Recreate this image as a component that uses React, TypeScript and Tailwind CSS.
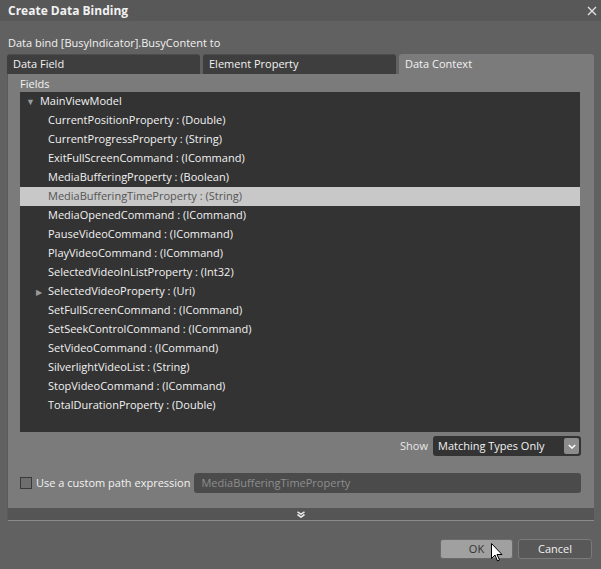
import type { FC } from 'react';

const fields: { name: string; type: string; expandable?: boolean; selected?: boolean }[] = [
  { name: 'CurrentPositionProperty', type: 'Double' },
  { name: 'CurrentProgressProperty', type: 'String' },
  { name: 'ExitFullScreenCommand', type: 'ICommand' },
  { name: 'MediaBufferingProperty', type: 'Boolean' },
  { name: 'MediaBufferingTimeProperty', type: 'String', selected: true },
  { name: 'MediaOpenedCommand', type: 'ICommand' },
  { name: 'PauseVideoCommand', type: 'ICommand' },
  { name: 'PlayVideoCommand', type: 'ICommand' },
  { name: 'SelectedVideoInListProperty', type: 'Int32' },
  { name: 'SelectedVideoProperty', type: 'Uri', expandable: true },
  { name: 'SetFullScreenCommand', type: 'ICommand' },
  { name: 'SetSeekControlCommand', type: 'ICommand' },
  { name: 'SetVideoCommand', type: 'ICommand' },
  { name: 'SilverlightVideoList', type: 'String' },
  { name: 'StopVideoCommand', type: 'ICommand' },
  { name: 'TotalDurationProperty', type: 'Double' },
];

const tabs = [
  { label: 'Data Field', width: 'w-[193px]' },
  { label: 'Element Property', width: 'w-[193px]' },
  { label: 'Data Context', width: 'w-[195px]', active: true },
];

const Chevron: FC<{ className?: string }> = ({ className }) => (
  <svg viewBox="0 0 10 6" className={className} fill="none" stroke="currentColor" strokeWidth="1.8">
    <path d="M1 1l4 4 4-4" />
  </svg>
);

export default function App() {
  return (
    <div className="relative h-[569px] w-[601px] overflow-hidden bg-[#616161] text-[11px] text-[#f2f2f2] [font-family:'Open_Sans',sans-serif]">
      {/* title bar */}
      <div className="flex h-[21px] items-center justify-between bg-[#585858] pl-[8px] pr-[4px]">
        <span className="text-[12px] font-bold">Create Data Binding</span>
        <svg viewBox="0 0 10 10" className="h-[10px] w-[10px] text-[#e0e0e0]" stroke="currentColor" strokeWidth="1.4">
          <path d="M1 1l8 8M9 1l-8 8" />
        </svg>
      </div>

      <div className="px-[7px]">
        <div className="pl-[1px] pt-[12px] leading-[19px]">Data bind [BusyIndicator].BusyContent to</div>

        {/* tabs */}
        <div className="mt-[2px] flex h-[20px] gap-[3px]">
          {tabs.map((t) => (
            <div
              key={t.label}
              className={`${t.width} flex items-center rounded-t-[3px] pl-[6px] ${
                t.active ? 'bg-[#7b7b7b]' : 'border-t border-[#4c4c4c] bg-[#3e3e3e]'
              }`}
            >
              {t.label}
            </div>
          ))}
        </div>

        {/* tab panel */}
        <div className="border-l border-[#5a5a5a] bg-[#7b7b7b]">
          <div className="pb-[15px] pl-[12px] pr-[13px] pt-[2px]">
            <div className="h-[16px] leading-[16px]">Fields</div>
            <div className="h-[340px] w-[560px] bg-[#333333]">
              <div className="flex h-[19px] items-center pl-[6px]">
                <span className="mr-[5px] text-[9px] text-[#9a9a9a]">▼</span>
                <span>MainViewModel</span>
              </div>
              {fields.map((f) => (
                <div
                  key={f.name}
                  className={`relative flex h-[19px] items-center pl-[28px] ${
                    f.selected ? 'bg-[#c8c8c8] text-[#555555]' : ''
                  }`}
                >
                  {f.expandable && (
                    <span className="absolute left-[16px] text-[8px] text-[#9a9a9a]">▶</span>
                  )}
                  {f.name} : ({f.type})
                </div>
              ))}
            </div>

            <div className="mt-[4px] flex items-center justify-end gap-[5px]">
              <span className="text-[#e8e8e8]">Show</span>
              <div className="flex h-[20px] w-[148px] items-center justify-between rounded-[3px] bg-[#333333] pl-[5px] pr-[2px]">
                <span>Matching Types Only</span>
                <div className="flex h-[16px] w-[15px] items-center justify-center rounded-[2px] bg-[#8c8c8c]">
                  <Chevron className="h-[5px] w-[8px] text-white" />
                </div>
              </div>
            </div>

            <div className="mt-[17px] flex items-center">
              <div className="h-[12px] w-[12px] border border-[#3a3a3a] bg-[#6e6e6e]" />
              <span className="ml-[4px]">Use a custom path expression</span>
              <div className="ml-[4px] flex h-[20px] flex-1 items-center rounded-[3px] bg-[#4b4b4b] pl-[7px] text-[#8e8e8e]">
                MediaBufferingTimeProperty
              </div>
            </div>
          </div>
          <div className="flex h-[13px] items-center justify-center border-b border-[#8a8a8a] bg-[#555555]">
            <svg viewBox="0 0 10 8" className="h-[7px] w-[10px] text-[#e8e8e8]" fill="none" stroke="currentColor" strokeWidth="1.8">
              <path d="M1 1l4 2.5 4-2.5M1 4l4 3 4-3" />
            </svg>
          </div>
        </div>
      </div>

      {/* buttons */}
      <div className="mt-[18px] flex justify-end gap-[5px] pr-[9px]">
        <button className="h-[20px] w-[73px] rounded-[3px] border border-[#6a6a6a] bg-[#a0a0a0] text-[#333333]">OK</button>
        <button className="h-[20px] w-[74px] rounded-[3px] border border-[#7a7a7a] bg-[#585858] text-[#f0f0f0]">Cancel</button>
      </div>

      {/* mouse cursor */}
      <svg viewBox="0 0 12 19" className="absolute left-[491px] top-[543px] h-[19px] w-[12px]">
        <path d="M0.5 0.5v15l3.5-3.5 2.5 6 2-1-2.5-5.5h5z" fill="white" stroke="black" strokeWidth="1" />
      </svg>
    </div>
  );
}
